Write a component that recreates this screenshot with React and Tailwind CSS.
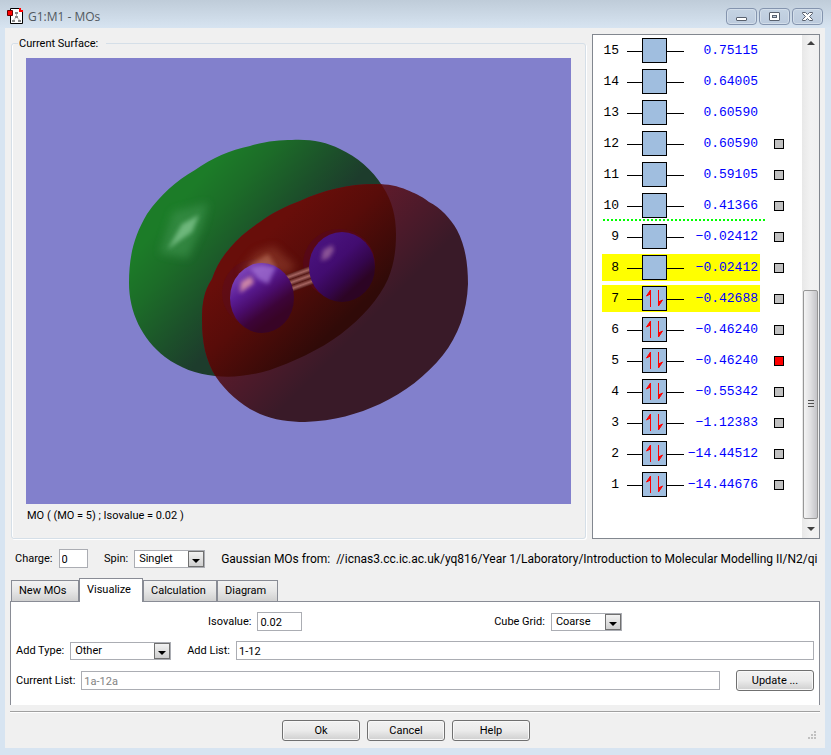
import { useState } from 'react';
import clsx from 'clsx';

const ORBITALS = [
  { n: 15, energy: '0.75115' },
  { n: 14, energy: '0.64005' },
  { n: 13, energy: '0.60590' },
  { n: 12, energy: '0.60590', surface: true },
  { n: 11, energy: '0.59105', surface: true },
  { n: 10, energy: '0.41366', surface: true },
  { n: 9, energy: '−0.02412', surface: true },
  { n: 8, energy: '−0.02412', surface: true },
  { n: 7, energy: '−0.42688', surface: true, occupied: true },
  { n: 6, energy: '−0.46240', surface: true, occupied: true },
  { n: 5, energy: '−0.46240', surface: true, occupied: true },
  { n: 4, energy: '−0.55342', surface: true, occupied: true },
  { n: 3, energy: '−1.12383', surface: true, occupied: true },
  { n: 2, energy: '−14.44512', surface: true, occupied: true },
  { n: 1, energy: '−14.44676', surface: true, occupied: true },
];

const HIGHLIGHTED = [7, 8];
const TABS = ['New MOs', 'Visualize', 'Calculation', 'Diagram'];

const GREEN_LOBE =
  'M129 283C129 256 134 236 147 214C160 195 176 181 195 170C212 158 230 150 250 146C266 141 280 140 292 140C310 139 326 142 340 149C357 157 372 169 383 187C392 201 396 216 396 234C396 251 394 264 388 279C379 299 362 318 341 334C320 350 290 363 270 370C250 376 232 378 215 376C196 374 180 368 165 357C142 339 129 312 129 283Z';
const RED_LOBE =
  'M376 184C348 184 324 190 300 201C284 207 272 213 260 222C248 230 238 238 230 248C222 257 216 267 212 279C204 291 202 303 202 320C202 343 206 361 216 377C227 393 242 406 260 414C274 420 290 422 305 422C334 421 358 414 380 404C405 392 426 376 443 355C458 336 467 312 468 284C468 263 465 245 457 230C451 219 440 207 429 202C420 195 414 193 407 190C398 186 388 184 376 184Z';

function TitleBar() {
  const button =
    'flex h-[17px] w-[31px] items-center justify-center rounded-sm border border-[#8494ae] bg-linear-to-b from-[#c5d3e3] to-[#bccbdd] shadow-[inset_0_0_0_1px_#d3deea]';
  return (
    <header className="flex h-7 items-center gap-[5px] bg-linear-to-b from-[#bfccd9] to-[#d7e4f1] pt-1 pr-2 pl-[7px]">
      <svg width="16" height="16" viewBox="0 0 16 16" aria-hidden="true">
        <path d="M3.500.5h9l3 3v12h-12z" fill="#fff" stroke="#000" />
        <path d="M12 0h2v2h2v2h-4z" fill="#f00" />
        <path d="M9.500 5v5M9.500 9l-3 3M9.500 9l3 3" stroke="#b0b0b0" fill="none" />
        <path d="M8 4h3v2H8zM8 8h3v2H8zM5 12h3v2H5zM11 12h3v2h-3z" fill="#888" />
        <path d="M.5 2.500h5v5h-5z" fill="#f00" stroke="#600" />
      </svg>
      <h1 className="flex-1 pt-px font-['Open_Sans',sans-serif] text-xs leading-4 text-[#515860]">
        G1:M1 - MOs
      </h1>
      <div className="flex gap-0.5">
        <button className={button} aria-label="Minimize">
          <svg width="13" height="11" viewBox="0 0 13 11">
            <rect x="1.500" y="6.500" width="10" height="3" rx="0.500" fill="#fff" stroke="#59616e" />
          </svg>
        </button>
        <button className={button} aria-label="Maximize">
          <svg width="13" height="11" viewBox="0 0 13 11">
            <rect x="1.500" y="1.500" width="10" height="8" rx="0.500" fill="#fff" stroke="#59616e" />
            <rect x="4.500" y="4.500" width="4" height="2" fill="#c3d0e0" stroke="#59616e" />
          </svg>
        </button>
        <button className={button} aria-label="Close">
          <svg width="13" height="11" viewBox="0 0 13 11">
            <path
              d="M1.500 1.500h3l2 2 2-2h3v1l-3 3 3 3v1h-3l-2-2-2 2h-3v-1l3-3-3-3z"
              fill="#fff"
              stroke="#59616e"
            />
          </svg>
        </button>
      </div>
    </header>
  );
}

// Molecule with the two lobes of the selected orbital
function SurfaceView() {
  return (
    <svg
      viewBox="26 58 545 446"
      className="block h-auto w-full bg-[#8280cc]"
      role="img"
      aria-label="Molecular orbital surface"
    >
      <defs>
        <linearGradient id="green" gradientUnits="userSpaceOnUse" x1="190" y1="190" x2="280" y2="268">
          <stop offset="0" stopColor="#1c7c28" />
          <stop offset="0.300" stopColor="#1c6c28" />
          <stop offset="0.700" stopColor="#1c502a" />
          <stop offset="1" stopColor="#1d3c2c" />
        </linearGradient>
        <linearGradient id="maroon" gradientUnits="userSpaceOnUse" x1="370" y1="200" x2="430" y2="260">
          <stop offset="0" stopColor="#5e1b2b" />
          <stop offset="0.500" stopColor="#4c1a2a" />
          <stop offset="1" stopColor="#391a28" />
        </linearGradient>
        <linearGradient id="overlap" gradientUnits="userSpaceOnUse" x1="260" y1="240" x2="340" y2="325">
          <stop offset="0" stopColor="#680e0a" />
          <stop offset="0.400" stopColor="#580c09" />
          <stop offset="1" stopColor="#300a08" />
        </linearGradient>
        <linearGradient id="atom1" x1="0.250" y1="0.100" x2="0.700" y2="0.800">
          <stop offset="0" stopColor="#7a40b4" />
          <stop offset="0.300" stopColor="#5a1c94" />
          <stop offset="0.550" stopColor="#4a0c6c" />
          <stop offset="0.800" stopColor="#3c0438" />
          <stop offset="1" stopColor="#380426" />
        </linearGradient>
        <linearGradient id="atom2" x1="0.250" y1="0.150" x2="0.750" y2="0.750">
          <stop offset="0" stopColor="#48127c" />
          <stop offset="0.400" stopColor="#420c70" />
          <stop offset="0.750" stopColor="#34064c" />
          <stop offset="1" stopColor="#2c0424" />
        </linearGradient>
        <linearGradient id="bond" x1="0" y1="0" x2="0" y2="1">
          <stop offset="0" stopColor="#5c201c" />
          <stop offset="0.500" stopColor="#a46460" />
          <stop offset="1" stopColor="#501816" />
        </linearGradient>
        <filter id="soft" x="-50%" y="-50%" width="200%" height="200%">
          <feGaussianBlur stdDeviation="4" />
        </filter>
        <filter id="softer" x="-50%" y="-50%" width="200%" height="200%">
          <feGaussianBlur stdDeviation="2" />
        </filter>
        <clipPath id="greenClip">
          <path d={GREEN_LOBE} />
        </clipPath>
        <clipPath id="redClip">
          <path d={RED_LOBE} />
        </clipPath>
      </defs>

      <path d={GREEN_LOBE} fill="url(#green)" />
      <path d="M160 253L173 212L208 203L202 226L188 258Z" fill="#3f9450" opacity="0.600" filter="url(#soft)" />
      <path d="M168 249L182 224L199 215L192 232Z" fill="#82c890" opacity="0.750" filter="url(#softer)" />

      <path d={RED_LOBE} fill="url(#maroon)" />
      <g clipPath="url(#greenClip)">
        <path d={RED_LOBE} fill="url(#overlap)" />
        <ellipse cx="256" cy="293" rx="34" ry="34" fill="#5a0a22" opacity="0.450" />
        <ellipse cx="339" cy="264" rx="36" ry="35" fill="#56081a" opacity="0.800" />
        <g clipPath="url(#redClip)">
          <path d="M240 272L256 252L274 246L296 266L288 274L250 274Z" fill="#9a4a34" opacity="0.500" filter="url(#soft)" />
          <path d="M248 266L268 254L276 266Z" fill="#d08a70" opacity="0.450" filter="url(#softer)" />
        </g>
      </g>

      <g transform="rotate(-20 301 280)">
        <rect x="286" y="270" width="30" height="6" fill="url(#bond)" />
        <rect x="286" y="276" width="30" height="6" fill="url(#bond)" />
        <rect x="286" y="282" width="30" height="6" fill="url(#bond)" />
      </g>

      <ellipse cx="262" cy="298" rx="32" ry="35" fill="url(#atom1)" />
      <path d="M250 268L262 265L276 267L268 284L258 279Z" fill="#a878d8" opacity="0.700" filter="url(#softer)" />
      <path d="M240 293L241 282L251 276L254 283Z" fill="#d890a8" opacity="0.900" filter="url(#softer)" />
      <ellipse cx="342" cy="267" rx="33" ry="35" fill="url(#atom2)" />
      <path d="M321 261L323 250L332 245L334 250L329 258Z" fill="#98609c" opacity="0.850" filter="url(#softer)" />
    </svg>
  );
}

function OrbitalBox({ occupied }) {
  return (
    <svg width="57" height="27" viewBox="0 0 57 27" className="block" aria-hidden="true">
      <path d="M0 14.500h57" stroke="#000" />
      <rect x="15.500" y="1.500" width="24" height="24" fill="#a0bedf" stroke="#000" />
      {occupied && (
        <g stroke="#f00" fill="#f00">
          <path d="M23.500 22V5l-4 6 4-2z" />
          <path d="M31.500 5v16l4-6-4 2z" />
        </g>
      )}
    </svg>
  );
}

function OrbitalList() {
  const [current, setCurrent] = useState(5);
  return (
    <section className="flex w-[228px] shrink-0 border border-[#82878f] bg-white">
      <div className="flex-1 pl-[9px]">
        <table className="border-collapse font-['Liberation_Mono',monospace] text-[13px] leading-[27px]">
          <tbody>
            {ORBITALS.map(({ n, energy, surface, occupied }) => {
              const fill = HIGHLIGHTED.includes(n) && 'bg-[#ffff00]';
              return (
                <tr key={n}>
                  <td className="relative py-0.5">
                    <div className={clsx('h-[27px] w-[25px] pr-2 text-right', fill)}>{n}</div>
                    {n === 10 && (
                      <div className="absolute bottom-0 left-px h-0.5 w-[162px] bg-[repeating-linear-gradient(90deg,#00ff00_0_2px,transparent_2px_4px)]" />
                    )}
                  </td>
                  <td className="py-0.5">
                    <div className={clsx('h-[27px]', fill)}>
                      <OrbitalBox occupied={occupied} />
                    </div>
                  </td>
                  <td className="py-0.5">
                    <div className={clsx('flex h-[27px] w-[76px] justify-end pr-0.5 text-[#0000ff]', fill)}>
                      {energy}
                    </div>
                  </td>
                  <td className="py-0.5 pl-3.5">
                    {surface && (
                      <input
                        type="checkbox"
                        aria-label={`Show orbital ${n}`}
                        checked={current === n}
                        onChange={() => setCurrent(n)}
                        className="block size-2.5 appearance-none border border-black bg-[#c0c0c0] checked:bg-[#ff0000]"
                      />
                    )}
                  </td>
                </tr>
              );
            })}
          </tbody>
        </table>
      </div>
      <div className="flex w-[17px] flex-col items-center bg-linear-to-r from-[#e8e8e8] via-[#f2f2f2] to-[#f0f0f0]">
        <svg width="8" height="17" viewBox="0 0 8 17" aria-hidden="true">
          <path d="M0 10l4-4 4 4z" fill="#404040" />
        </svg>
        <div className="grow-[239]" />
        <div className="flex w-[15px] grow-[220] items-center justify-center rounded-xs border border-[#979797] bg-linear-to-r from-[#f4f4f4] via-[#e0e0e2] to-[#c4c4c8]">
          <svg width="6" height="8" viewBox="0 0 6 8" aria-hidden="true">
            <path d="M0 .5h6M0 3.500h6M0 6.500h6" stroke="#505050" />
          </svg>
        </div>
        <svg width="8" height="19" viewBox="0 0 8 19" aria-hidden="true">
          <path d="M0 8l4 4 4-4z" fill="#404040" />
        </svg>
      </div>
    </section>
  );
}

function Field({ id, label, value, disabled, className }) {
  return (
    <div className={clsx('flex items-center gap-1.5', className)}>
      <label htmlFor={id}>{label}</label>
      <input
        id={id}
        defaultValue={value}
        disabled={disabled}
        className="h-[19px] w-full min-w-0 flex-1 border border-[#abadb3] bg-white px-0.5 pt-px disabled:text-[#838383]"
      />
    </div>
  );
}

function Select({ id, label, options, width }) {
  return (
    <div className="flex items-center gap-1.5">
      <label htmlFor={id}>{label}</label>
      <div className={clsx('relative h-[18px]', width)}>
        <select
          id={id}
          className="block h-full w-full appearance-none border border-[#abadb3] bg-white pr-4 pb-px pl-1"
        >
          {options.map((o) => (
            <option key={o}>{o}</option>
          ))}
        </select>
        <span className="pointer-events-none absolute inset-y-px right-px flex w-4 items-end justify-center border border-[#707070] bg-linear-to-b from-[#f2f2f2] to-[#cfcfcf] pb-[3px]">
          <svg width="8" height="4" viewBox="0 0 8 4" aria-hidden="true">
            <path d="M0 0h8L4 4z" fill="#000" />
          </svg>
        </span>
      </div>
    </div>
  );
}

function Button({ children }) {
  return (
    <button className="h-[21px] w-[78px] shrink-0 rounded-[3px] border border-[#707070] bg-linear-to-b from-[#f2f2f2] from-0% via-[#ebebeb] via-50% to-[#cfcfcf] to-100% shadow-[inset_0_0_0_1px_#f8f8f8]">
      {children}
    </button>
  );
}

export default function App() {
  const [tab, setTab] = useState('Visualize');

  return (
    <div className="flex min-h-screen flex-col bg-[#d7e4f1] font-[Roboto,sans-serif] text-[11px] leading-4 text-black">
      <TitleBar />
      <main className="mr-1.5 mb-[7px] ml-[5px] flex-1 bg-[#f0f0f0] pt-1.5">
        <div className="flex gap-1.5 pr-[5px] pl-1.5">
          <fieldset className="min-w-0 flex-1 rounded-[3px] border border-[#d5dfe8] px-3.5 pb-3.5 shadow-[inset_1px_0_0_#fff,1px_1px_0_#fff]">
            <legend className="-ml-2 pt-0.5 pr-2 pl-px">Current Surface:</legend>
            <div className="pt-1.5">
              <SurfaceView />
              <p className="pt-1 pl-px">MO ( (MO = 5) ; Isovalue = 0.02 )</p>
            </div>
          </fieldset>
          <OrbitalList />
        </div>

        <div className="flex items-center gap-4 pt-2.5 pr-[5px] pl-2.5">
          <Field id="charge" label="Charge:" value="0" className="w-[73px] shrink-0" />
          <Select id="spin" label="Spin:" options={['Singlet', 'Triplet']} width="w-[71px]" />
          <p className="min-w-0 flex-1 overflow-hidden text-xs whitespace-pre">
            Gaussian MOs from:{'  '}//icnas3.cc.ic.ac.uk/yq816/Year 1/Laboratory/Introduction to Molecular Modelling II/N2/qi
          </p>
        </div>

        <div className="px-[5px] pt-2.5">
          <div role="tablist" className="flex items-end pl-px">
            {TABS.map((t) => (
              <button
                key={t}
                role="tab"
                aria-selected={t === tab}
                onClick={() => setTab(t)}
                className={clsx(
                  'border border-b-0 border-[#898c95] px-[7px] text-left',
                  t === 'New MOs' && 'w-[68px]',
                  t === 'Visualize' && 'w-16',
                  t === 'Calculation' && 'w-[74px]',
                  t === 'Diagram' && 'w-[61px]',
                  t === tab
                    ? 'relative -mb-px h-6 bg-white pb-0.5'
                    : 'h-[21px] bg-linear-to-b from-[#f2f2f2] from-0% via-[#e6e6e6] via-50% to-[#d0d0d0] to-100%'
                )}
              >
                {t}
              </button>
            ))}
          </div>
          <div
            role="tabpanel"
            className="flex flex-col gap-2.5 border border-b-0 border-[#898c95] bg-white pt-2.5 pr-[5px] pb-3.5 pl-[5px]"
          >
            <div className="flex justify-evenly">
              <Field id="isovalue" label="Isovalue:" value="0.02" className="w-[94px]" />
              <Select id="grid" label="Cube Grid:" options={['Coarse', 'Medium', 'Fine']} width="w-[71px]" />
            </div>
            <div className="flex gap-4">
              <Select id="type" label="Add Type:" options={['Other', 'All']} width="w-[101px]" />
              <Field id="list" label="Add List:" value="1-12" className="flex-1" />
            </div>
            <div className="flex items-center gap-4">
              <Field id="current" label="Current List:" value="1a-12a" disabled className="flex-1" />
              <Button>Update ...</Button>
            </div>
          </div>
          <hr className="mt-1.5 h-0.5 border-t border-b border-t-[#a0a0a0] border-b-white" />
        </div>

        <footer className="flex items-end pt-[7px]">
          <div className="flex flex-1 justify-center gap-[7px]">
            <Button>Ok</Button>
            <Button>Cancel</Button>
            <Button>Help</Button>
          </div>
          <svg width="18" height="12" viewBox="0 0 18 12" aria-hidden="true">
            <path
              d="M7 2h2v2H7zM7 5h2v2H7zM7 8h2v2H7zM4 5h2v2H4zM4 8h2v2H4zM1 8h2v2H1z"
              fill="#c0c0c0"
            />
          </svg>
        </footer>
      </main>
    </div>
  );
}
